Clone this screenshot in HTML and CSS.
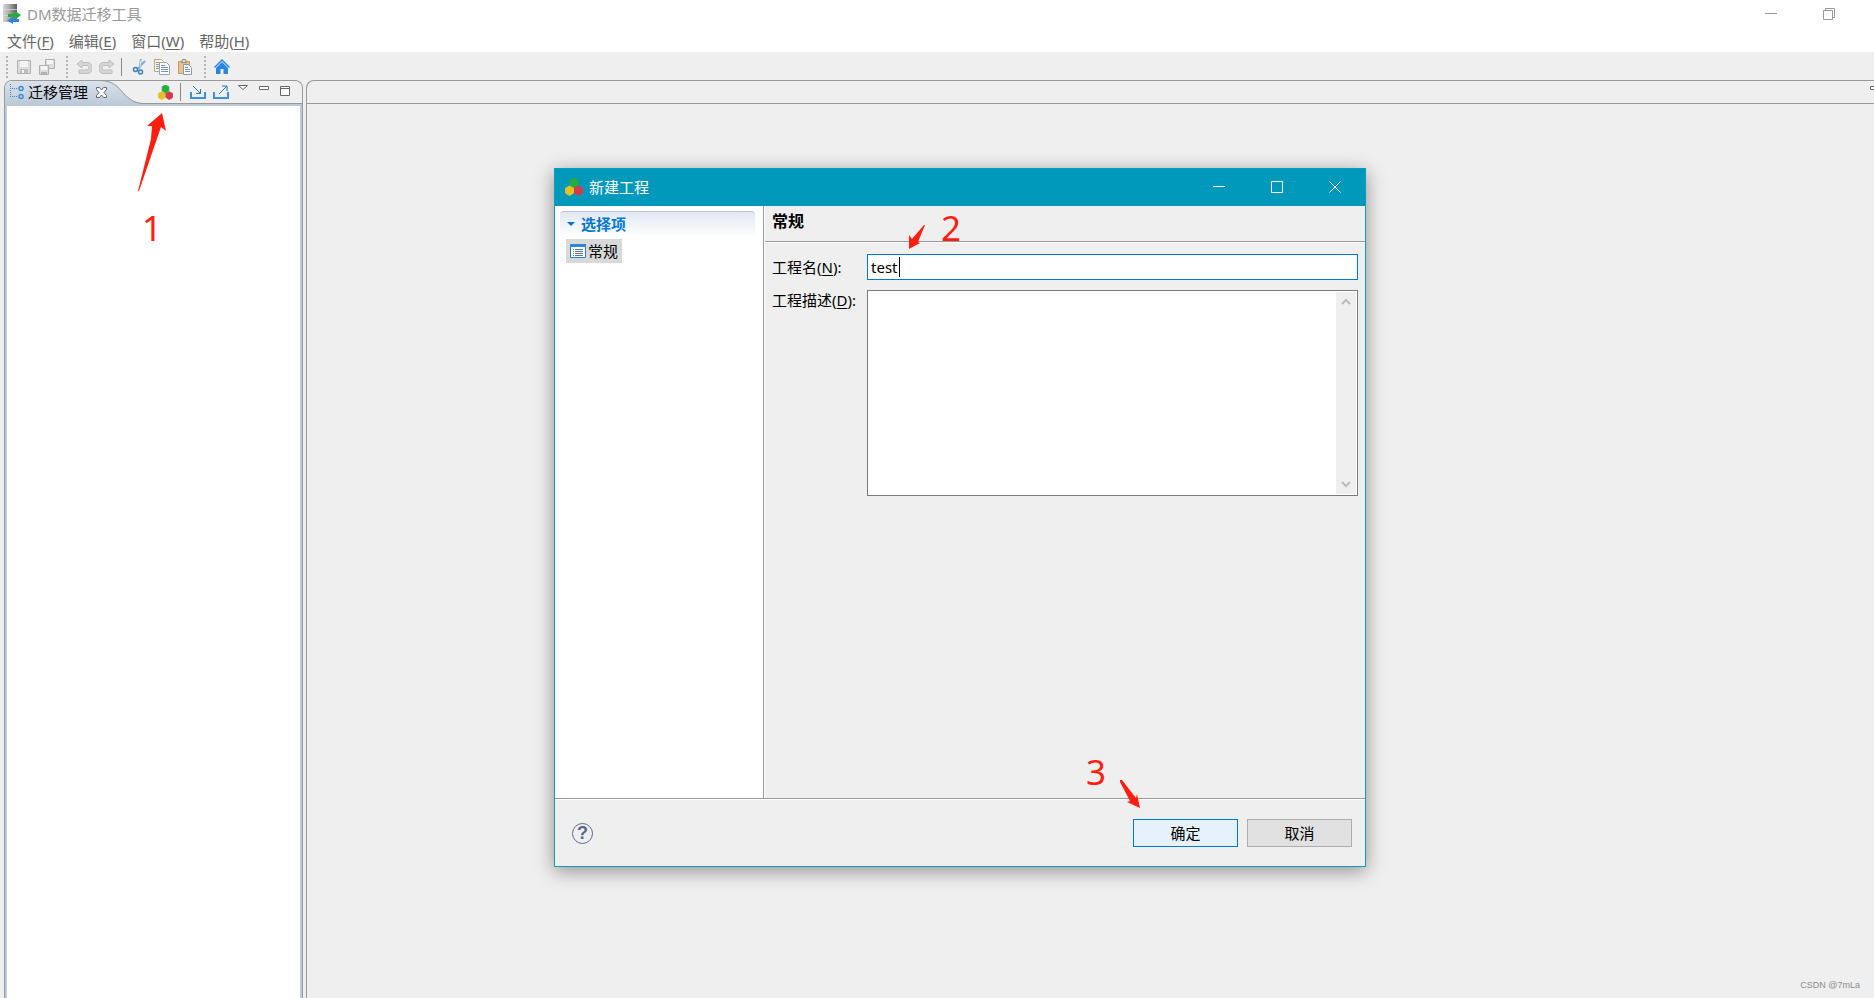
FILE: index.html
```html
<!DOCTYPE html>
<html lang="zh-CN">
<head>
    <meta charset="UTF-8">
    <meta name="viewport" content="width=device-width, initial-scale=1.0">
    <title>DM数据迁移工具</title>
    <link rel="stylesheet" href="styles.css">
</head>
<body>

<!-- shared three-colour project icon -->
<svg class="defs" aria-hidden="true">
    <symbol id="project" viewBox="0 0 18 18">
        <path d="M9 0l4 2v5l-4 3-4-3V2z" fill="#23ad3b" stroke="#23ad3b" stroke-linejoin="round"/>
        <path d="M4.500 8l4 2.200v4.800l-4 2.500-4-2.500v-4.800z" fill="#e8bf25" stroke="#e8bf25" stroke-linejoin="round"/>
        <path d="M13.500 8l4 2.200v4.800l-4 2.500-4-2.500v-4.800z" fill="#d03c4d" stroke="#d03c4d" stroke-linejoin="round"/>
    </symbol>
</svg>

<header class="titlebar">
    <svg class="app-icon" width="18" height="20" viewBox="0 0 18 20">
        <defs>
            <linearGradient id="metal"><stop offset="0" stop-color="#d4d4d4"/><stop offset=".4" stop-color="#b0b0b0"/><stop offset="1" stop-color="#5a5a5a"/></linearGradient>
        </defs>
        <path d="M1 0h13v18H0V2z" fill="url(#metal)"/>
        <path d="M0 5.500h14M0 11.500h14" stroke="#e0e0e0" stroke-opacity=".7"/>
        <path d="M5 10h7V7l6 4-6 5v-3H5z" fill="#23ad3b"/>
        <path d="M16 15h-6v-2l-6 3.500 6 3.500v-2h6z" fill="#2e86dc"/>
    </svg>
    <span class="app-name">DM数据迁移工具</span>
    <button class="win-btn" aria-label="最小化"><svg width="12" height="12" viewBox="0 0 12 12"><path d="M0 5.500h12"/></svg></button>
    <button class="win-btn" aria-label="还原"><svg width="12" height="12" viewBox="0 0 12 12"><path d="M.5 2.500h9v9h-9zM2.500 2.500v-2h9v9h-2"/></svg></button>
</header>

<nav class="menubar">
    <button>文件(<u>F</u>)</button>
    <button>编辑(<u>E</u>)</button>
    <button>窗口(<u>W</u>)</button>
    <button>帮助(<u>H</u>)</button>
</nav>

<div class="toolbar">
    <i class="handle"></i>
    <button aria-label="保存">
        <svg width="16" height="16" viewBox="0 0 16 16"><path d="M1.500 1.500h13v13h-13z" fill="#dcdcdc" stroke="#b0b0b0"/><path d="M4 2h8v6H4z" fill="#f4f4f4"/><path d="M4 10h8v4H4z" fill="#bdbdbd"/><path d="M6 11h2v3H6z" fill="#f4f4f4"/></svg>
    </button>
    <button aria-label="全部保存">
        <svg width="16" height="16" viewBox="0 0 16 16"><path d="M6.500.5h9v9h-9z" fill="#dcdcdc" stroke="#b0b0b0"/><path d="M8 1h6v4H8z" fill="#f4f4f4"/><path d="M.5 6.500h9v9h-9z" fill="#dcdcdc" stroke="#b0b0b0"/><path d="M2 7h6v4H2z" fill="#f4f4f4"/><path d="M2 13h6v2H2z" fill="#b0b0b0"/></svg>
    </button>
    <i class="handle"></i>
    <button aria-label="撤销">
        <svg width="16" height="16" viewBox="0 0 16 16"><path d="M6 1L1 5l5 4V6.500h5c2.500 0 2.500 4.500 0 4.500H3v3.500h9c5.500 0 5-11 0-11H6z" fill="#d6d6d6" stroke="#bebebe"/></svg>
    </button>
    <button aria-label="重做">
        <svg width="16" height="16" viewBox="0 0 16 16"><path d="M10 1l5 4-5 4V6.500H5c-2.500 0-2.500 4.500 0 4.500h8v3.500H4c-5.500 0-5-11 0-11h6z" fill="#d6d6d6" stroke="#bebebe"/></svg>
    </button>
    <i class="divider"></i>
    <button aria-label="剪切">
        <svg width="16" height="16" viewBox="0 0 16 16" fill="none"><path d="M10 0L8.500 9.500M14 2L6.500 10" stroke="#86add0" stroke-width="2"/><path d="M10 1L9 8" stroke="#d8e8f6"/><circle cx="4.500" cy="10.500" r="2" stroke="#3a80b8" stroke-width="1.500"/><circle cx="9.500" cy="13" r="2" stroke="#3a80b8" stroke-width="1.500"/></svg>
    </button>
    <button aria-label="复制">
        <svg width="16" height="16" viewBox="0 0 16 16"><path d="M.5.5h7l2 2v10h-9z" fill="#fff8e0" stroke="#c0a970"/><path d="M2 3.500h4m-4 2h4m-4 2h4m-4 2h4" stroke="#8099bd"/><path d="M5.500 3.500h7l3 3v9h-10z" fill="#fff" stroke="#98a5bd"/><path d="M7 6.500h4m-4 2h7m-7 2h7m-7 2h7" stroke="#7390bd"/></svg>
    </button>
    <button aria-label="粘贴">
        <svg width="16" height="16" viewBox="0 0 16 16"><path d="M1.500 2.500h11v12h-11z" fill="#e8c583" stroke="#c49c5c"/><path d="M4.500 3.500l1-3h3l1 3z" fill="#ddd" stroke="#888"/><path d="M6.500 5.500h5l3 3v7h-8z" fill="#fff" stroke="#8b99b5"/><path d="M8 8.500h3m-3 2h5m-5 2h5" stroke="#7390bd"/></svg>
    </button>
    <i class="handle"></i>
    <button aria-label="主页">
        <svg width="16" height="16" viewBox="0 0 16 16"><path d="M0 8l8-8 8 8-1 1-7-7-7 7z" fill="#2786de"/><path d="M2 9l6-6 6 6v6H9.500v-5h-3v5H2z" fill="#2786de"/></svg>
    </button>
</div>

<main class="workbench">
    <section class="view">
        <div class="view-head">
            <svg class="tab-shape" width="138" height="24" viewBox="0 0 138 24">
                <defs>
                    <linearGradient id="tab" x2="0" y2="1"><stop offset="0" stop-color="#dbe3ec"/><stop offset="1" stop-color="#bccad9"/></linearGradient>
                </defs>
                <path d="M0 24V0h98c8 0 13 4 18 10s12 13 22 13v1z" fill="url(#tab)"/>
                <path d="M94 .5c11 0 17 4 22 10s12 13 22 13" fill="none" stroke="#999"/>
            </svg>
            <div class="tab">
                <svg width="16" height="16" viewBox="0 0 16 16" fill="none" stroke="#3a8ad6"><path d="M1.500 0v14M3 4.500h6M3 12.500h6" stroke-dasharray="1 1"/><circle cx="12" cy="4.500" r="2" stroke-width="1.500"/><circle cx="12" cy="12.500" r="2" stroke-width="1.500"/></svg>
                <span>迁移管理</span>
                <button aria-label="关闭"><svg width="11" height="11" viewBox="0 0 11 11"><path d="M.5.5h3l2 2.500 2-2.500h3v2L8 5.500l2.500 3v2h-3l-2-2.500-2 2.500h-3v-2l2.500-3-2.500-3z" fill="#fff" stroke="#666"/></svg></button>
            </div>
            <div class="view-tools">
                <button aria-label="新建工程"><svg width="15" height="15"><use href="#project"/></svg></button>
                <i class="divider"></i>
                <button aria-label="导入"><svg width="16" height="14" viewBox="0 0 16 14" fill="none" stroke="#3a8fe0"><path d="M1 7v6h14V7" stroke-width="2"/><path d="M3 1l7 7M10.500 4v4.500H6" stroke="#2577b5"/></svg></button>
                <button aria-label="导出"><svg width="16" height="14" viewBox="0 0 16 14" fill="none" stroke="#3a8fe0"><path d="M1 7v6h14V7" stroke-width="2"/><path d="M6 9l8-8M9 1h5v5" stroke="#2577b5"/></svg></button>
            </div>
            <div class="view-controls">
                <button aria-label="视图菜单"><svg width="10" height="12" viewBox="0 0 10 12"><path d="M.5 1.500h9L5 5.500z"/></svg></button>
                <button aria-label="最小化"><svg width="10" height="12" viewBox="0 0 10 12"><path d="M.5 2.500h9v3h-9z"/></svg></button>
                <button aria-label="最大化"><svg width="10" height="12" viewBox="0 0 10 12"><path d="M.5 2.500h9v9h-9zM.5 4.500h9"/></svg></button>
            </div>
        </div>
        <div class="view-body"></div>
    </section>
    <section class="editor">
        <div class="editor-head">
            <button aria-label="最小化"><svg width="4" height="12" viewBox="0 0 4 12"><path d="M4 2.500H.5v3H4"/></svg></button>
        </div>
    </section>
</main>

<div class="dialog" role="dialog" aria-labelledby="dialog-title">
    <div class="dialog-title">
        <svg width="18" height="18"><use href="#project"/></svg>
        <span id="dialog-title">新建工程</span>
        <button aria-label="最小化"><svg width="12" height="12" viewBox="0 0 12 12"><path d="M0 5.500h12"/></svg></button>
        <button aria-label="最大化"><svg width="12" height="12" viewBox="0 0 12 12"><path d="M.5.5h11v11H.5z"/></svg></button>
        <button aria-label="关闭"><svg width="12" height="12" viewBox="0 0 12 12"><path d="M.5.5l11 11M11.500.5l-11 11"/></svg></button>
    </div>
    <div class="dialog-main">
        <aside class="options">
            <h2><svg width="8" height="4" viewBox="0 0 8 4"><path d="M0 0h8L4 4z" fill="#0078d7"/></svg>选择项</h2>
            <button class="option">
                <svg width="16" height="14" viewBox="0 0 16 14"><path d="M.5.5h15v13H.5z" fill="#fff" stroke="#2b7fd0"/><path d="M0 0h16v3H0z" fill="#2b86de"/><path d="M3 5.500h1m1 0h8M3 7.500h1m1 0h8M3 9.500h1m1 0h8M3 11.500h1m1 0h8" stroke="#5d7891"/></svg>
                常规
            </button>
        </aside>
        <div class="page">
            <h1>常规</h1>
            <form class="fields" id="project-form">
                <label for="name">工程名(<u>N</u>):</label>
                <div class="name-box">
                    <input type="text" id="name" value="test">
                    <i class="caret"></i>
                </div>
                <label for="desc">工程描述(<u>D</u>):</label>
                <div class="desc-box">
                    <textarea id="desc"></textarea>
                    <div class="scroll">
                        <button type="button" aria-label="向上"><svg width="10" height="8" viewBox="0 0 10 8"><path d="M1 6l4-4 4 4"/></svg></button>
                        <button type="button" aria-label="向下"><svg width="10" height="8" viewBox="0 0 10 8"><path d="M1 2l4 4 4-4"/></svg></button>
                    </div>
                </div>
            </form>
        </div>
    </div>
    <div class="dialog-footer">
        <button class="help" aria-label="帮助">?</button>
        <button class="btn primary" type="submit" form="project-form">确定</button>
        <button class="btn" type="button">取消</button>
    </div>
</div>

<!-- step marks -->
<svg class="arrow arrow-1" width="30" height="80" viewBox="0 0 30 80"><path d="M25 1l4 18-5-4L2 79H1l13-52 1-13-5 0z"/></svg>
<span class="step step-1">1</span>
<svg class="arrow arrow-2" width="18" height="26" viewBox="0 0 18 26"><path d="M1 25V11l3 4L16 1h1l-7 17 2 1z"/></svg>
<span class="step step-2">2</span>
<svg class="arrow arrow-3" width="22" height="30" viewBox="0 0 22 30"><path d="M21 29L8 23l3-1L1 3V1h2l14 18 1-4z"/></svg>
<span class="step step-3">3</span>

<span class="watermark">CSDN @7mLa</span>

</body>
</html>
```
FILE: styles.css
```css
* {
    box-sizing: border-box;
}
body {
    margin: 0;
    height: 100vh;
    display: flex;
    flex-direction: column;
    overflow: hidden;
    background: #efefef;
    color: #000;
    font-family: "Noto Sans", "Noto Sans CJK SC", sans-serif;
    font-size: 15px;
    line-height: 20px;
}
button {
    display: flex;
    align-items: center;
    justify-content: center;
    padding: 0;
    border: 0;
    background: none;
    color: inherit;
    font: inherit;
}
svg {
    display: block;
    flex: none;
}
u {
    text-underline-offset: 2px;
}
.defs {
    position: absolute;
    width: 0;
    height: 0;
}

/* main window */
.titlebar {
    display: flex;
    align-items: center;
    height: 30px;
    padding: 0 16px 2px 3px;
    background: #fff;
    color: #999;
}
.app-name {
    flex: 1;
    margin-left: 6px;
}
.win-btn {
    width: 58px;
    height: 28px;
}
.win-btn svg {
    fill: none;
    stroke: #999;
}
.menubar {
    display: flex;
    gap: 15px;
    height: 22px;
    padding-left: 7px;
    background: #fff;
    color: #666;
}
.toolbar {
    display: flex;
    align-items: center;
    height: 28px;
    padding: 2px 0 0;
}
.toolbar button {
    width: 23px;
    height: 24px;
}
.handle {
    width: 2px;
    height: 22px;
    margin: 0 4px 0 8px;
    background: repeating-linear-gradient(#b4b4b4 0 2px, transparent 2px 4px);
}
.handle:first-child {
    margin-left: 6px;
}
.divider {
    width: 1px;
    height: 18px;
    margin: 0 5px 0 3px;
    background: #888;
}

/* workbench */
.workbench {
    flex: 1;
    display: flex;
    gap: 3px;
    padding-left: 4px;
}
.view {
    width: 299px;
    display: flex;
    flex-direction: column;
    overflow: hidden;
    border: 1px solid #999;
    border-bottom: 0;
    border-radius: 8px 8px 0 0;
    background: #bccad9;
}
.view-head {
    position: relative;
    display: flex;
    align-items: flex-start;
    height: 23px;
    background: #efefef;
    border-bottom: 1px solid #999;
}
.tab-shape {
    position: absolute;
    left: 0;
    top: -1px;
}
.tab {
    position: relative;
    display: flex;
    align-items: center;
    height: 22px;
    padding-left: 4px;
    flex: 1;
}
.tab span {
    margin: 0 8px 0 3px;
}
.view-tools {
    position: relative;
    display: flex;
    align-items: center;
    height: 22px;
}
.view-tools button {
    width: 23px;
}
.view-controls {
    display: flex;
    gap: 11px;
    padding: 3px 12px 0 6px;
}
.view-controls svg,
.editor-head svg {
    fill: #fff;
    stroke: #666;
}
.view-body {
    flex: 1;
    margin: 2px 2px 0;
    background: #fff;
}
.editor {
    flex: 1;
    border: solid #999;
    border-width: 1px 0 0 1px;
    border-radius: 8px 0 0 0;
}
.editor-head {
    display: flex;
    justify-content: flex-end;
    align-items: flex-start;
    height: 23px;
    padding-top: 3px;
    border-bottom: 1px solid #999;
}

/* new project dialog */
.dialog {
    position: absolute;
    left: 554px;
    top: 168px;
    width: 812px;
    height: 699px;
    display: flex;
    flex-direction: column;
    border: 1px solid #0b9bbf;
    background: #efefef;
    box-shadow: 0 4px 18px rgba(0, 0, 0, 0.4);
}
.dialog-title {
    display: flex;
    align-items: center;
    height: 37px;
    padding: 0 1px 2px 10px;
    background: #0099bc;
    color: #fff;
}
.dialog-title span {
    flex: 1;
    margin-left: 6px;
}
.dialog-title button {
    width: 58px;
    height: 35px;
}
.dialog-title button svg {
    fill: none;
    stroke: #fff;
}
.dialog-main {
    flex: 1;
    display: flex;
    border-bottom: 1px solid #999;
}
.options {
    width: 209px;
    padding: 5px 8px 0 5px;
    border-right: 1px solid #999;
    background: #fff;
}
.options h2 {
    display: flex;
    align-items: center;
    gap: 6px;
    height: 26px;
    margin: 0 0 2px;
    padding: 0 0 2px 7px;
    border-top: 1px solid #b5c7de;
    border-radius: 4px 4px 0 0;
    background: linear-gradient(#e1e8f3, #fff);
    color: #0078d7;
    font-size: 15px;
}
.option {
    gap: 2px;
    height: 24px;
    margin-left: 6px;
    padding: 0 4px;
    background: #d9d9d9;
}
.page {
    flex: 1;
    border-left: 1px solid #fff;
}
.page h1 {
    height: 36px;
    margin: 0;
    padding: 5px 0 0 7px;
    border-bottom: 1px solid #999;
    font-size: 16px;
}
.fields {
    display: grid;
    grid-template-columns: 87px 1fr;
    row-gap: 10px;
    column-gap: 8px;
    padding: 11px 7px 0;
    border-top: 1px solid #fff;
}
.fields label {
    padding-top: 3px;
    white-space: nowrap;
}
.fields label[for="desc"] {
    padding-top: 0;
}
.name-box {
    position: relative;
    height: 26px;
}
.name-box input {
    display: block;
    width: 100%;
    height: 26px;
    padding: 0 3px;
    border: 1px solid #0078d7;
    outline: 0;
    background: #fff;
    font: inherit;
}
.caret {
    position: absolute;
    left: 32px;
    top: 3px;
    width: 1px;
    height: 20px;
    background: #000;
}
.desc-box {
    display: flex;
    height: 206px;
    padding: 1px;
    border: 1px solid #7a7a7a;
    background: #fff;
}
.desc-box textarea {
    flex: 1;
    border: 0;
    outline: 0;
    resize: none;
    font: inherit;
}
.scroll {
    display: flex;
    flex-direction: column;
    justify-content: space-between;
    background: #efefef;
}
.scroll button {
    width: 20px;
    height: 20px;
}
.scroll svg {
    fill: none;
    stroke: #bbb;
    stroke-width: 2;
}
.dialog-footer {
    display: flex;
    align-items: center;
    height: 67px;
    padding: 0 13px 0 17px;
    border-top: 1px solid #fff;
}
.help {
    width: 21px;
    height: 21px;
    margin-right: auto;
    border: 1px solid #56688a;
    border-radius: 50%;
    color: #56688a;
    font-family: "Liberation Sans", sans-serif;
    font-size: 18px;
    font-weight: bold;
}
.btn {
    width: 105px;
    height: 28px;
    margin-left: 9px;
    border: 1px solid #adadad;
    background: #e1e1e1;
}
.btn.primary {
    border-color: #0078d7;
    background: #e5f1fb;
}

/* step marks */
.step,
.arrow {
    position: absolute;
}
.arrow {
    fill: #ff1e10;
}
.step {
    color: #ff1e10;
    font-size: 35px;
    line-height: 40px;
}
.arrow-1 {
    left: 137px;
    top: 112px;
}
.step-1 {
    left: 142px;
    top: 208px;
}
.arrow-2 {
    left: 908px;
    top: 224px;
}
.step-2 {
    left: 941px;
    top: 208px;
}
.arrow-3 {
    left: 1119px;
    top: 779px;
}
.step-3 {
    left: 1086px;
    top: 752px;
}
.watermark {
    position: absolute;
    right: 14px;
    bottom: 6px;
    color: #8c8c8c;
    font-family: "Liberation Sans", sans-serif;
    font-size: 9px;
    line-height: 14px;
}
```
